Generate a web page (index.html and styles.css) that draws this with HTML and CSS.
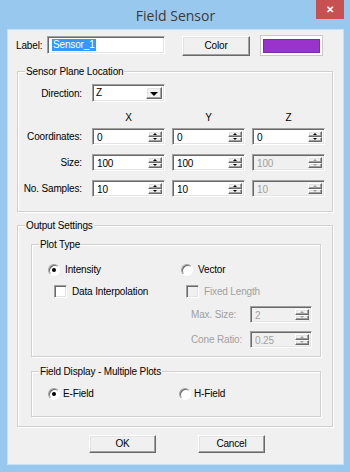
FILE: index.html
```html
<!DOCTYPE html>
<html lang="en">
<head>
  <meta charset="UTF-8">
  <title>Field Sensor</title>
  <link rel="stylesheet" href="styles.css">
</head>
<body>
  <div class="frame">
    <div class="titlebar">
      <span class="title">Field Sensor</span>
      <span class="close">&#x2715;</span>
    </div>

    <div class="client">
      <div class="top-row">
        <span class="lbl name-lbl">Label:</span>
        <div class="edit name-edit"><span class="sel">Sensor_1</span></div>
        <div class="btn color-btn">Color</div>
        <div class="swatch"><div class="swatch-fill"></div></div>
      </div>

      <div class="group plane">
        <span class="group-title">Sensor Plane Location</span>
        <div class="plane-grid">
          <span class="lbl rlbl mid">Direction:</span>
          <div class="edit combo">
            <span class="combo-text">Z</span>
            <span class="btn combo-btn"><span class="arrow-down"></span></span>
          </div>
          <span></span><span></span>

          <span></span>
          <span class="colhead">X</span>
          <span class="colhead">Y</span>
          <span class="colhead">Z</span>

          <span class="lbl rlbl">Coordinates:</span>
          <div class="edit spin"><span class="spin-text">0</span><span class="ud"><span class="btn ud-btn"><i class="tri-up"></i></span><span class="btn ud-btn"><i class="tri-down"></i></span></span></div>
          <div class="edit spin"><span class="spin-text">0</span><span class="ud"><span class="btn ud-btn"><i class="tri-up"></i></span><span class="btn ud-btn"><i class="tri-down"></i></span></span></div>
          <div class="edit spin"><span class="spin-text">0</span><span class="ud"><span class="btn ud-btn"><i class="tri-up"></i></span><span class="btn ud-btn"><i class="tri-down"></i></span></span></div>

          <span class="lbl rlbl">Size:</span>
          <div class="edit spin"><span class="spin-text">100</span><span class="ud"><span class="btn ud-btn"><i class="tri-up"></i></span><span class="btn ud-btn"><i class="tri-down"></i></span></span></div>
          <div class="edit spin"><span class="spin-text">100</span><span class="ud"><span class="btn ud-btn"><i class="tri-up"></i></span><span class="btn ud-btn"><i class="tri-down"></i></span></span></div>
          <div class="edit spin disabled"><span class="spin-text">100</span><span class="ud"><span class="btn ud-btn"><i class="tri-up"></i></span><span class="btn ud-btn"><i class="tri-down"></i></span></span></div>

          <span class="lbl rlbl">No. Samples:</span>
          <div class="edit spin"><span class="spin-text">10</span><span class="ud"><span class="btn ud-btn"><i class="tri-up"></i></span><span class="btn ud-btn"><i class="tri-down"></i></span></span></div>
          <div class="edit spin"><span class="spin-text">10</span><span class="ud"><span class="btn ud-btn"><i class="tri-up"></i></span><span class="btn ud-btn"><i class="tri-down"></i></span></span></div>
          <div class="edit spin disabled"><span class="spin-text">10</span><span class="ud"><span class="btn ud-btn"><i class="tri-up"></i></span><span class="btn ud-btn"><i class="tri-down"></i></span></span></div>
        </div>
      </div>

      <div class="group output">
        <span class="group-title">Output Settings</span>

        <div class="group plot-type">
          <span class="group-title">Plot Type</span>
          <div class="pt-cols">
            <div class="pt-col left-col">
              <div class="opt"><span class="radio checked"></span><span class="opt-text">Intensity</span></div>
              <div class="opt check-row"><span class="check"></span><span class="opt-text">Data Interpolation</span></div>
            </div>
            <div class="pt-col right-col">
              <div class="opt"><span class="radio"></span><span class="opt-text">Vector</span></div>
              <div class="opt check-row off"><span class="check disabled"></span><span class="opt-text">Fixed Length</span></div>
              <div class="param-row">
                <span class="lbl off param-lbl">Max. Size:</span>
                <div class="edit spin small disabled"><span class="spin-text">2</span><span class="ud"><span class="btn ud-btn"><i class="tri-up"></i></span><span class="btn ud-btn"><i class="tri-down"></i></span></span></div>
              </div>
              <div class="param-row">
                <span class="lbl off param-lbl">Cone Ratio:</span>
                <div class="edit spin small disabled"><span class="spin-text">0.25</span><span class="ud"><span class="btn ud-btn"><i class="tri-up"></i></span><span class="btn ud-btn"><i class="tri-down"></i></span></span></div>
              </div>
            </div>
          </div>
        </div>

        <div class="group field-display">
          <span class="group-title">Field Display - Multiple Plots</span>
          <div class="fd-row">
            <div class="opt fd-opt"><span class="radio checked"></span><span class="opt-text">E-Field</span></div>
            <div class="opt fd-opt"><span class="radio"></span><span class="opt-text">H-Field</span></div>
          </div>
        </div>
      </div>

      <div class="button-row">
        <div class="btn push ok-btn">OK</div>
        <div class="btn push cancel-btn">Cancel</div>
      </div>
    </div>
  </div>
</body>
</html>
```

FILE: styles.css
```css
* {
  box-sizing: border-box;
}
body {
  margin: 0;
  font-family: "Liberation Sans", Arial, sans-serif;
  font-size: 10px;
  letter-spacing: -0.15px;
  color: #000;
}
.frame {
  width: 350px;
  height: 472px;
  background: #99c8ef;
  padding: 0 7px 8px 8px;
}
.titlebar {
  position: relative;
  height: 30px;
  display: flex;
  align-items: center;
  justify-content: center;
}
.title {
  font-family: "Open Sans", "Noto Sans", sans-serif;
  font-size: 14px;
  font-weight: 400;
  letter-spacing: 0;
  color: #3a3a3a;
  margin-top: 1px;
}
.close {
  position: absolute;
  top: 0;
  right: -1px;
  width: 28px;
  height: 19px;
  background: #c75050;
  color: #fff;
  font-size: 10px;
  font-weight: bold;
  letter-spacing: 0;
  display: flex;
  align-items: center;
  justify-content: center;
}
.client {
  height: 434px;
  background: #f0f0f0;
  box-shadow: 0 0 0 1px #c6e0f6;
}

/* generic controls */
.lbl {
  line-height: 17px;
  white-space: nowrap;
}
.rlbl {
  text-align: right;
  padding-right: 3px;
}
.mid {
  align-self: center;
}
.off {
  color: #a0a0a0;
}
.edit {
  background: #fff;
  border: 1px solid;
  border-color: #a0a0a0 #fff #fff #a0a0a0;
  box-shadow: inset 1px 1px 0 #696969, inset -1px -1px 0 #e3e3e3;
}
.btn {
  background: #f0f0f0;
  border: 1px solid;
  border-color: #fff #696969 #696969 #fff;
  box-shadow: inset -1px -1px 0 #a0a0a0, inset 1px 1px 0 #e3e3e3;
}

/* top row */
.top-row {
  display: flex;
  align-items: flex-start;
  height: 26px;
  padding-top: 5px;
}
.name-lbl {
  margin-left: 8px;
  width: 31px;
  margin-top: 2px;
}
.name-edit {
  width: 118px;
  height: 18px;
  margin-top: 1px;
  padding: 2px 0 0 4px;
}
.sel {
  background: #3399ff;
  color: #fff;
  line-height: 12px;
  padding: 0 1px;
  display: inline-block;
}
.color-btn {
  width: 68px;
  height: 20px;
  margin-left: 17px;
  margin-top: 1px;
  line-height: 18px;
  text-align: center;
}
.swatch {
  width: 63px;
  height: 21px;
  margin-left: 10px;
  border: 1px solid #c8c8c8;
  background: #fff;
  padding: 3px 2px 2px 2px;
}
.swatch-fill {
  height: 100%;
  background: #9933cc;
  border: 1px solid #7d29a8;
}

/* group boxes */
.group {
  position: relative;
  border: 1px solid #d0d0d0;
  box-shadow: inset 1px 1px 0 #fff, 1px 1px 0 #fff;
}
.group-title {
  position: absolute;
  top: -7px;
  left: 7px;
  line-height: 13px;
  padding: 0 1px;
  background: #f0f0f0;
  white-space: nowrap;
}
.plane {
  margin: 15px 0 0 9px;
  width: 316px;
  height: 141px;
}
.plane-grid {
  display: grid;
  grid-template-columns: 67px 73px 73px 73px;
  grid-template-rows: 18px 26px 26px 26px 17px;
  column-gap: 7px;
  padding-top: 12px;
}
.colhead {
  align-self: end;
  text-align: center;
  line-height: 13px;
  padding-bottom: 4px;
}
.combo {
  display: flex;
  align-items: stretch;
  padding: 2px;
}
.combo-text {
  flex: 1;
  line-height: 12px;
  padding-left: 1px;
}
.combo-btn {
  width: 16px;
  display: flex;
  align-items: center;
  justify-content: center;
}
.arrow-down {
  width: 0;
  height: 0;
  border-left: 4px solid transparent;
  border-right: 4px solid transparent;
  border-top: 4px solid #000;
  margin-top: 1px;
}
.spin {
  height: 17px;
  display: flex;
  padding: 2px 2px 2px 3px;
}
.spin-text {
  flex: 1;
  line-height: 13px;
  padding-left: 1px;
}
.ud {
  width: 14px;
  display: flex;
  flex-direction: column;
}
.ud-btn {
  flex: 1;
  display: flex;
  align-items: center;
  justify-content: center;
}
.tri-up, .tri-down {
  width: 0;
  height: 0;
  border-left: 2px solid transparent;
  border-right: 2px solid transparent;
}
.tri-up {
  border-bottom: 2px solid #000;
}
.tri-down {
  border-top: 2px solid #000;
}
.spin.disabled {
  background: #f0f0f0;
  color: #a0a0a0;
}
.spin.disabled .tri-up {
  border-bottom-color: #a0a0a0;
}
.spin.disabled .tri-down {
  border-top-color: #a0a0a0;
}

/* output settings */
.output {
  margin: 13px 0 0 9px;
  width: 316px;
  height: 202px;
  padding: 18px 0 0 13px;
}
.plot-type {
  width: 290px;
  height: 113px;
}
.pt-cols {
  display: flex;
  padding: 18px 0 0 16px;
}
.left-col {
  width: 133px;
}
.opt {
  display: flex;
  align-items: center;
  height: 13px;
}
.opt-text {
  margin-left: 5px;
}
.check-row {
  margin-top: 9px;
  padding-left: 6px;
}
.right-col .check-row {
  padding-left: 5px;
}
.radio {
  width: 12px;
  height: 12px;
  border-radius: 50%;
  border: 1px solid;
  border-color: #a0a0a0 #fff #fff #a0a0a0;
  box-shadow: inset 1px 1px 0 #696969;
  background: #fff;
  display: flex;
  align-items: center;
  justify-content: center;
}
.radio.checked::after {
  content: "";
  width: 4px;
  height: 4px;
  border-radius: 50%;
  background: #000;
}
.check {
  width: 13px;
  height: 13px;
  background: #fff;
  border: 1px solid;
  border-color: #a0a0a0 #fff #fff #a0a0a0;
  box-shadow: inset 1px 1px 0 #696969, inset -1px -1px 0 #e3e3e3;
}
.check.disabled {
  background: #f0f0f0;
}
.param-row {
  display: flex;
  align-items: center;
  margin-top: 8px;
}
.param-lbl {
  width: 69px;
  padding-left: 10px;
}
.spin.small {
  width: 62px;
}

.field-display {
  width: 290px;
  height: 46px;
  margin-top: 14px;
}
.fd-row {
  display: flex;
  padding: 15px 0 0 16px;
}
.fd-opt {
  width: 131px;
}
.fd-opt .opt-text {
  margin-left: 3px;
}

/* bottom buttons */
.button-row {
  display: flex;
  margin-top: 8px;
  padding-left: 81px;
}
.push {
  width: 67px;
  height: 18px;
  line-height: 16px;
  text-align: center;
}
.cancel-btn {
  margin-left: 42px;
}
```
